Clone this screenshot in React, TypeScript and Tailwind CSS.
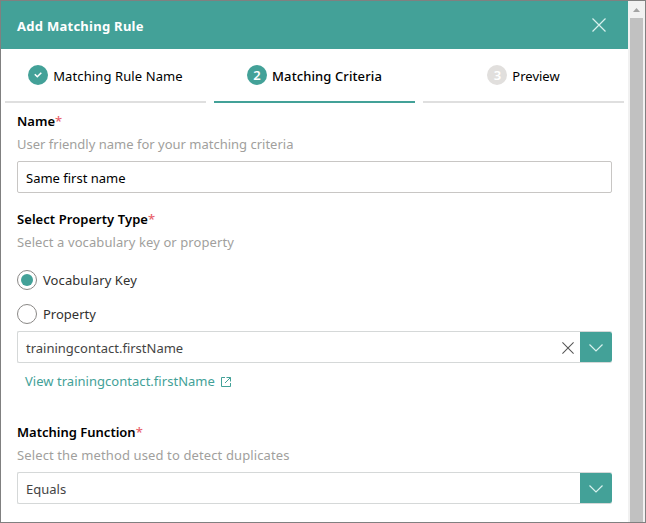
import type { ReactNode } from "react";

function Chevron() {
  return (
    <svg width="16" height="16" viewBox="0 0 16 16" fill="none" stroke="#d9f1ee" strokeWidth="1.2">
      <path d="M1.5 5.5 8 12 14.5 5.5" />
    </svg>
  );
}

function Cross({ size, color }: { size: number; color: string }) {
  return (
    <svg width={size} height={size} viewBox="0 0 14 14" fill="none" stroke={color} strokeWidth="1.2">
      <path d="M.5.5l13 13M13.5.5l-13 13" />
    </svg>
  );
}

function Step({ badge, badgeClass, label, labelClass, lineClass }: {
  badge: ReactNode; badgeClass: string; label: string; labelClass: string; lineClass: string;
}) {
  return (
    <div className={`flex h-[54px] w-[201px] justify-center gap-[5px] border-b-2 pt-4 ${lineClass}`}>
      <span className={`flex size-5 items-center justify-center rounded-full text-[13px] leading-5 font-semibold text-white ${badgeClass}`}>{badge}</span>
      <span className={`h-5 pt-px leading-5 text-black ${labelClass}`}>{label}</span>
    </div>
  );
}

function Heading({ title, titleClass, hint, hintClass }: { title: string; titleClass: string; hint: string; hintClass: string }) {
  return (
    <div>
      <div className="flex h-5 leading-5">
        <span className={`font-semibold text-black ${titleClass}`}>{title}</span>
        <span className="font-medium text-[#e8626a]">*</span>
      </div>
      <div className={`mt-[3px] h-5 leading-5 text-[#a19f9d] ${hintClass}`}>{hint}</div>
    </div>
  );
}

function Select({ value, valueClass, clearable }: { value: string; valueClass: string; clearable?: boolean }) {
  return (
    <div className="flex h-8 w-[595px] items-center rounded-[2px] border border-r-0 border-[#d5d8d8]">
      <span className={`grow pt-[3px] pl-2 text-[#444] ${valueClass}`}>{value}</span>
      {clearable && <span className="mt-0.5 mr-[6px]"><Cross size={12} color="#555" /></span>}
      <span className="flex h-[30px] w-8 items-center justify-center rounded-r-[2px] bg-[#43a198]"><Chevron /></span>
    </div>
  );
}

function Radio({ label, labelClass, checked }: { label: string; labelClass: string; checked?: boolean }) {
  return (
    <div className="flex h-5 items-center gap-[6px]">
      <span className="flex size-5 items-center justify-center rounded-full border border-[#8a8886]">
        {checked && <span className="size-3 rounded-full bg-[#43a198]" />}
      </span>
      <span className={`pt-0.5 text-[#323130] ${labelClass}`}>{label}</span>
    </div>
  );
}

export default function App() {
  return (
    <div className="flex h-[523px] w-[646px] overflow-hidden border border-[#808080] bg-white font-['Noto_Sans','Open_Sans',sans-serif] text-[13px] whitespace-nowrap">
      <main className="w-[627px]">
        <header className="flex h-12 items-center justify-between bg-[#43a198] pr-[22px] pl-4 text-white">
          <h1 className="pt-[3px] font-bold tracking-[0.27px]">Add Matching Rule</h1>
          <Cross size={14} color="#d9f1ee" />
        </header>
        <nav className="flex gap-2 pl-1">
          <Step
            badge={<svg width="8" height="6" viewBox="0 0 8 6" fill="none" stroke="white" strokeWidth="1.6"><path d="M.8 2.2 3.3 4.7 7.3.7" /></svg>}
            badgeClass="bg-[#43a198]" label="Matching Rule Name" labelClass="tracking-[0.11px]" lineClass="border-[#dfdfdf]"
          />
          <Step badge="2" badgeClass="bg-[#43a198]" label="Matching Criteria" labelClass="font-medium tracking-[0.1px]" lineClass="border-[#43a198]" />
          <Step badge="3" badgeClass="bg-[#e1dfdd]" label="Preview" labelClass="" lineClass="border-[#dfdfdf]" />
        </nav>
        <section className="pt-2 pl-4">
          <Heading title="Name" titleClass="" hint="User friendly name for your matching criteria" hintClass="" />
          <div className="mt-[7px] flex h-8 w-[595px] items-center rounded-[2px] border border-[#c8c6c4] pt-[3px] pl-2 text-black">Same first name</div>
        </section>
        <section className="pt-4 pl-4">
          <Heading title="Select Property Type" titleClass="tracking-[0.06px]" hint="Select a vocabulary key or property" hintClass="tracking-[0.09px]" />
          <div className="mt-[18px] mb-[7px] flex flex-col gap-[14px]">
            <Radio label="Vocabulary Key" labelClass="tracking-[0.08px]" checked />
            <Radio label="Property" labelClass="" />
          </div>
          <Select value="trainingcontact.firstName" valueClass="" clearable />
          <a className="mt-2 flex h-5 items-center gap-[6px] pl-2 leading-5 text-[#43a198]">
            <span className="tracking-[0.03px]">View trainingcontact.firstName</span>
            <svg className="mt-px" width="10" height="10" viewBox="0 0 10 10" fill="none" stroke="#43a198">
              <path d="M4 .5H.5v9h9V6M5.5.5h4v4M9.5.5 4 6" />
            </svg>
          </a>
        </section>
        <section className="pt-[31px] pl-4">
          <Heading title="Matching Function" titleClass="" hint="Select the method used to detect duplicates" hintClass="tracking-[0.12px]" />
          <div className="mt-[7px]"><Select value="Equals" valueClass="" /></div>
        </section>
      </main>
      <aside className="flex w-[17px] flex-col items-center bg-[#f1f1f1]">
        <div className="flex h-[17px] items-center justify-center">
          <svg width="7" height="4" viewBox="0 0 7 4"><path d="M0 4 3.5 0 7 4z" fill="#a3a3a3" /></svg>
        </div>
        <div className="w-[13px] grow bg-[#c1c1c1]" />
      </aside>
    </div>
  );
}
